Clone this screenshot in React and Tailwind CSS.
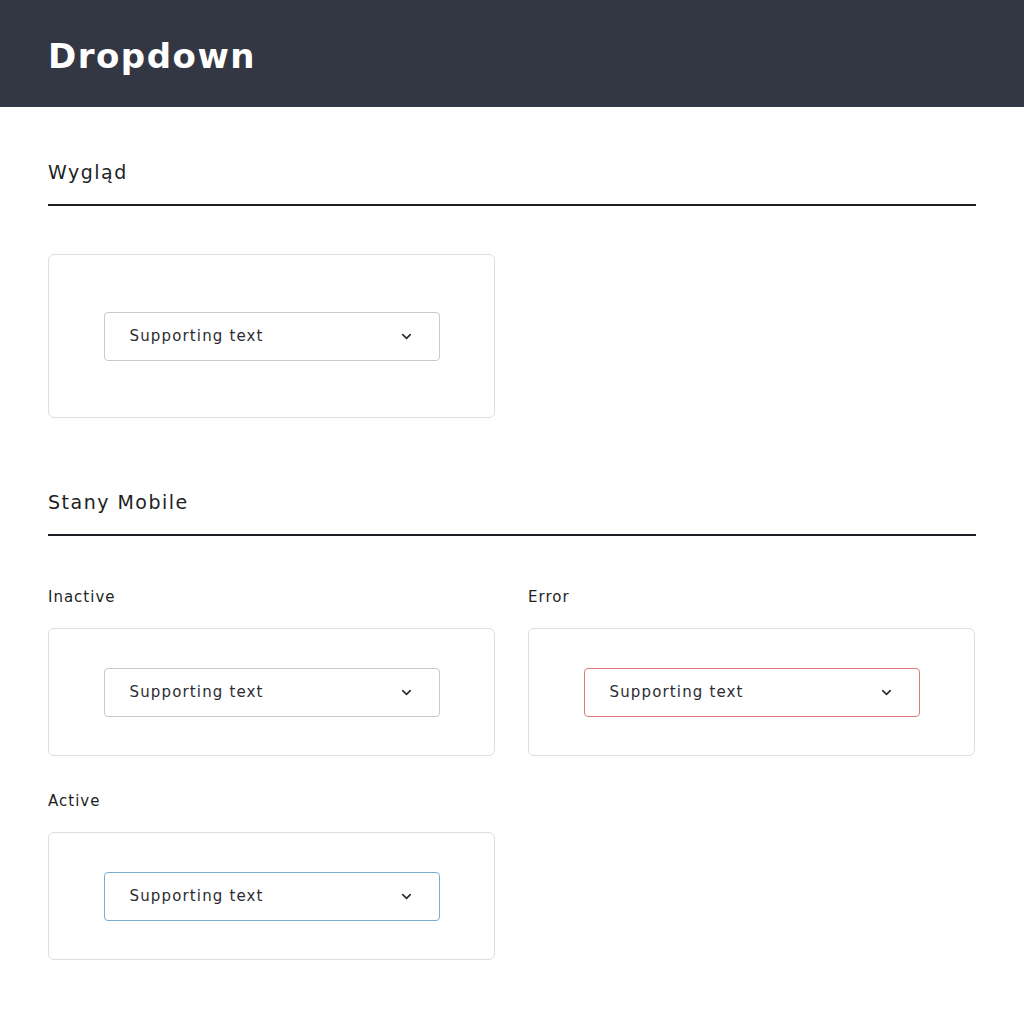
import { ChevronDown } from 'lucide-react';

const font = { fontFamily: '"DejaVu Sans", "Open Sans", sans-serif' };

function Dropdown({ state = 'inactive' }) {
  const border =
    state === 'error'
      ? 'border-[#e07a7a]'
      : state === 'active'
      ? 'border-[#76aecb]'
      : 'border-[#c9c9cc]';
  return (
    <div
      className={`w-[336px] h-[49px] rounded-[4px] border ${border} bg-white flex items-center justify-between pl-[25px] pr-[25px]`}
    >
      <span className="text-[15px] text-[#2b2d33] tracking-[1.15px]">Supporting text</span>
      <ChevronDown className="w-[15px] h-[15px] text-[#2b2d33]" strokeWidth={2.6} />
    </div>
  );
}

function Card({ state, tall }) {
  return (
    <div
      className={`w-[447px] ${tall ? 'h-[164px]' : 'h-[128px]'} rounded-[6px] border border-[#dedee0] flex items-center justify-center`}
    >
      <Dropdown state={state} />
    </div>
  );
}

function SectionTitle({ children }) {
  return (
    <div className="pb-[20px] border-b-2 border-[#1e1f24]">
      <h2 className="text-[19px] text-[#1e1f24] leading-[24px] tracking-[1.5px]">{children}</h2>
    </div>
  );
}

function Labeled({ label, state }) {
  return (
    <div className="flex flex-col gap-[22px]">
      <span className="text-[15px] text-[#1e1f24] leading-[18px] tracking-[1px]">{label}</span>
      <Card state={state} />
    </div>
  );
}

export default function App() {
  return (
    <div className="min-h-screen bg-white" style={font}>
      <header className="h-[107px] bg-[#333744] flex items-center px-[48px]">
        <h1 className="text-[34px] font-bold text-white tracking-[1.5px] mt-[6px]">Dropdown</h1>
      </header>

      <div className="px-[48px] pt-[53px]">
        <SectionTitle>Wygląd</SectionTitle>
        <div className="mt-[48px]">
          <Card tall />
        </div>

        <div className="mt-[72px]">
          <SectionTitle>Stany Mobile</SectionTitle>
        </div>

        <div className="mt-[52px] grid grid-cols-[447px_447px] gap-x-[33px] gap-y-[36px]">
          <Labeled label="Inactive" />
          <Labeled label="Error" state="error" />
          <Labeled label="Active" state="active" />
        </div>
      </div>
    </div>
  );
}
